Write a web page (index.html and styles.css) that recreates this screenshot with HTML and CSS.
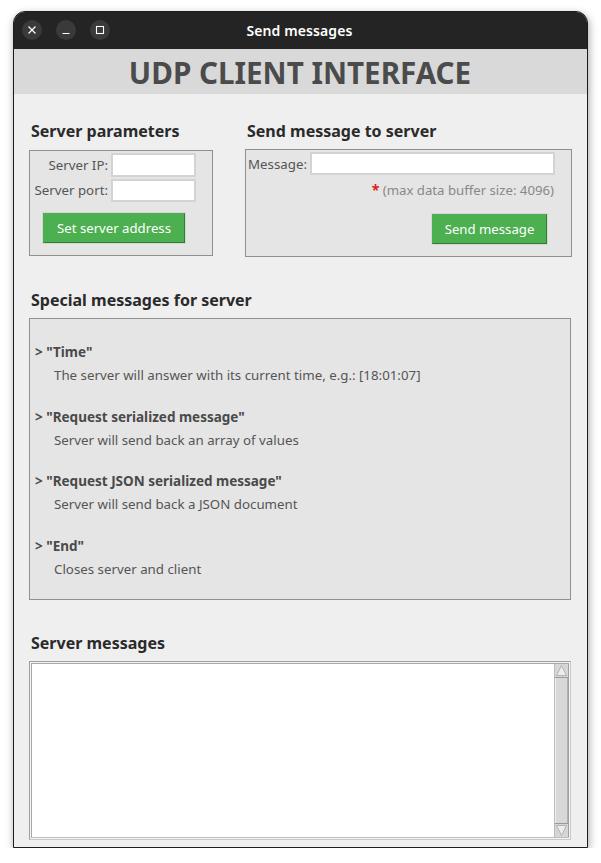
FILE: index.html
```html
<!DOCTYPE html>
<html>
<head>
<meta charset="utf-8">
<link rel="stylesheet" href="styles.css">
</head>
<body>
<div class="window">
  <div class="titlebar">
    <div class="controls">
      <span class="ctl"><svg width="20" height="20" viewBox="0 0 20 20"><path d="M6.5 6.5l7 7M13.5 6.5l-7 7" stroke="#fff" stroke-width="1.2" fill="none"/></svg></span>
      <span class="ctl"><svg width="20" height="20" viewBox="0 0 20 20"><path d="M6.5 13.5h7" stroke="#fff" stroke-width="1.2" fill="none"/></svg></span>
      <span class="ctl"><svg width="20" height="20" viewBox="0 0 20 20"><rect x="6.5" y="6.5" width="7" height="7" stroke="#fff" stroke-width="1.1" fill="none"/></svg></span>
    </div>
    <div class="wtitle">Send messages</div>
  </div>
  <div class="header">UDP CLIENT INTERFACE</div>
  <div class="content">
    <div class="toprow">
      <div class="col-left">
        <h2 class="heading">Server parameters</h2>
        <div class="panel params">
          <div class="formgrid">
            <label class="lbl">Server IP:</label>
            <div class="field"></div>
            <label class="lbl">Server port:</label>
            <div class="field"></div>
          </div>
          <div class="btnrow-left"><button class="btn btn-set">Set server address</button></div>
        </div>
      </div>
      <div class="col-right">
        <h2 class="heading">Send message to server</h2>
        <div class="panel sendbox">
          <div class="msgrow">
            <label class="lbl">Message:</label>
            <div class="field msgfield"></div>
          </div>
          <div class="note"><span class="star">*</span> (max data buffer size: 4096)</div>
          <div class="btnrow-right"><button class="btn btn-send">Send message</button></div>
        </div>
      </div>
    </div>

    <h2 class="heading special-h">Special messages for server</h2>
    <div class="panel special">
      <div class="item">
        <div class="item-title">&gt; "Time"</div>
        <div class="item-desc">The server will answer with its current time, e.g.: [18:01:07]</div>
      </div>
      <div class="item">
        <div class="item-title">&gt; "Request serialized message"</div>
        <div class="item-desc">Server will send back an array of values</div>
      </div>
      <div class="item">
        <div class="item-title">&gt; "Request JSON serialized message"</div>
        <div class="item-desc">Server will send back a JSON document</div>
      </div>
      <div class="item">
        <div class="item-title">&gt; "End"</div>
        <div class="item-desc">Closes server and client</div>
      </div>
    </div>

    <h2 class="heading server-h">Server messages</h2>
    <div class="textarea-outer">
      <div class="textarea-inner">
        <div class="text-area"></div>
        <div class="scrollbar">
          <div class="sb-btn"><svg width="13" height="13" viewBox="0 0 13 13"><path d="M1.5 11.5L6.5 1.5l5 10z" fill="#ececec" stroke="#a8a8a8" stroke-width="0.8"/></svg></div>
          <div class="sb-track"></div>
          <div class="sb-btn"><svg width="13" height="13" viewBox="0 0 13 13"><path d="M1.5 1.5L6.5 11.5l5-10z" fill="#ececec" stroke="#a8a8a8" stroke-width="0.8"/></svg></div>
        </div>
      </div>
    </div>
  </div>
</div>
</body>
</html>
```
FILE: styles.css
```css
* { box-sizing: border-box; }
html, body { margin: 0; padding: 0; background: #ffffff; }
body { font-family: "Noto Sans", "Open Sans", sans-serif; }

.window {
  width: 575px;
  height: 837px;
  margin: 11px 0 0 13px;
  border: 1px solid #1c1c1c;
  border-radius: 12px 12px 0 0;
  background: #efefef;
  overflow: hidden;
  box-shadow: 1px 3px 8px rgba(0,0,0,0.35);
  display: flex;
  flex-direction: column;
}

.titlebar {
  height: 37px;
  flex: none;
  background: #242424;
  position: relative;
  display: flex;
  align-items: center;
  justify-content: center;
}
.controls {
  position: absolute;
  left: 8px;
  top: 8px;
  display: flex;
  gap: 14px;
}
.ctl {
  width: 20px;
  height: 20px;
  border-radius: 50%;
  background: #3a3a3a;
  display: block;
}
.ctl svg { display: block; }
.wtitle {
  color: #ffffff;
  font-size: 14px;
  font-weight: 600;
  letter-spacing: 0.1px;
  padding-right: 2px;
}

.header {
  height: 45px;
  flex: none;
  background: #d9d9d9;
  color: #4b4b4b;
  font-size: 29.6px;
  font-weight: 700;
  display: flex;
  align-items: center;
  justify-content: center;
  padding-right: 1px;
  border-top: 1px solid #d9d9d9;
}

.content {
  padding: 26px 16px 0 15px;
  flex: 1;
  display: flex;
  flex-direction: column;
}

.heading {
  margin: 0;
  font-size: 16px;
  font-weight: 700;
  line-height: 22px;
  color: #2a2a2a;
  padding-left: 2px;
}

.toprow {
  display: flex;
  gap: 32px;
}
.col-left { width: 184px; flex: none; }
.col-right { flex: 1; }
.col-left .heading { margin-bottom: 8px; }
.col-right .heading { margin-bottom: 7px; }

.panel {
  background: #e5e5e5;
  border: 1px solid #909090;
  color: #555;
  font-size: 13px;
}

.lbl { color: #555; font-size: 13.3px; line-height: 18px; }

.field {
  background: #ffffff;
  border: 2px solid #d3d3d3;
}

.params {
  height: 106px;
  padding: 1px 16px 0 0;
}
.formgrid {
  display: grid;
  grid-template-columns: 78px 85px;
  grid-template-rows: 25px 24px;
  column-gap: 3px;
  row-gap: 1px;
  align-items: center;
}
.formgrid .lbl { text-align: right; }
.formgrid .field { height: 24px; }
.formgrid .field:last-child { height: 23px; }

.btnrow-left { padding: 11px 0 0 13px; }

.btn {
  font-family: "Noto Sans", "Open Sans", sans-serif;
  font-size: 13.2px;
  color: #ffffff;
  background: #4caf50;
  border: 1px solid #4caf50;
  border-right-color: #2e7d32;
  border-bottom-color: #2e7d32;
  box-shadow: 0 0 0 1px #d6d6d6;
  padding: 0;
  display: flex;
  align-items: center;
  justify-content: center;
}
.btn-set { width: 142px; height: 30px; }
.btn-send { width: 115px; height: 30px; }

.sendbox {
  height: 108px;
  padding: 2px 16px 0 2px;
}
.msgrow {
  display: flex;
  align-items: center;
  gap: 3px;
}
.msgfield { width: 245px; height: 23px; }
.note {
  text-align: right;
  color: #888888;
  font-size: 13.2px;
  line-height: 18px;
  margin-top: 6px;
  padding-right: 1px;
}
.star { color: #e02020; font-weight: 700; font-size: 14px; }
.btnrow-right {
  display: flex;
  justify-content: flex-end;
  padding: 15px 8px 0 0;
}

.special-h { margin-top: 32px; margin-bottom: 7px; }

.special {
  height: 282px;
  padding: 24px 4px 0 5px;
  display: flex;
  flex-direction: column;
  gap: 23.7px;
}
.item { display: flex; flex-direction: column; gap: 5px; }
.item-title {
  font-weight: 700;
  color: #4a4a4a;
  font-size: 13.5px;
  line-height: 18px;
}
.item-desc {
  color: #555;
  font-size: 13.3px;
  line-height: 18px;
  padding-left: 19px;
}

.server-h { margin-top: 32px; margin-bottom: 7px; }

.textarea-outer {
  width: 542px;
  height: 179px;
  border: 1px solid #9e9e9e;
  border-right-color: #c8c8c8;
  border-bottom-color: #c8c8c8;
  background: #f4f4f4;
  padding: 1px;
}
.textarea-inner {
  height: 100%;
  display: flex;
  border: 1px solid #a8a8a8;
  border-right: none;
  border-bottom-color: #bdbdbd;
  background: #ffffff;
}
.text-area { flex: 1; background: #ffffff; }
.scrollbar {
  width: 15px;
  flex: none;
  display: flex;
  flex-direction: column;
  background: #d6d6d6;
  border-left: 1px solid #bcbcbc;
  border-right: 1px solid #a0a0a0;
}
.sb-btn {
  height: 14px;
  flex: none;
  background: #d6d6d6;
  border-bottom: 1px solid #9a9a9a;
  display: flex;
  align-items: center;
  justify-content: center;
}
.sb-btn:last-child { border-bottom: none; border-top: 1px solid #9a9a9a; }
.sb-btn svg { display: block; }
.sb-track {
  flex: 1;
  background: #d8d8d8;
  border-left: 1px solid #f0f0f0;
  border-right: 1px solid #b0b0b0;
}
```
